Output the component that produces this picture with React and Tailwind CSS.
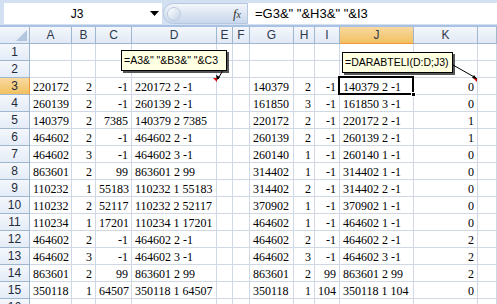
import React from "react";

const COLS = ["A", "B", "C", "D", "E", "F", "G", "H", "I", "J", "K", ""];

const ROWS = [
  null,
  null,
  ["220172", "2", "-1", "220172 2 -1", "140379", "2", "-1", "140379 2 -1", "0"],
  ["260139", "2", "-1", "260139 2 -1", "161850", "3", "-1", "161850 3 -1", "0"],
  ["140379", "2", "7385", "140379 2 7385", "220172", "2", "-1", "220172 2 -1", "1"],
  ["464602", "2", "-1", "464602 2 -1", "260139", "2", "-1", "260139 2 -1", "1"],
  ["464602", "3", "-1", "464602 3 -1", "260140", "1", "-1", "260140 1 -1", "0"],
  ["863601", "2", "99", "863601 2 99", "314402", "1", "-1", "314402 1 -1", "0"],
  ["110232", "1", "55183", "110232 1 55183", "314402", "2", "-1", "314402 2 -1", "0"],
  ["110232", "2", "52117", "110232 2 52117", "370902", "1", "-1", "370902 1 -1", "0"],
  ["110234", "1", "17201", "110234 1 17201", "464602", "1", "-1", "464602 1 -1", "0"],
  ["464602", "2", "-1", "464602 2 -1", "464602", "2", "-1", "464602 2 -1", "2"],
  ["464602", "3", "-1", "464602 3 -1", "464602", "3", "-1", "464602 3 -1", "2"],
  ["863601", "2", "99", "863601 2 99", "863601", "2", "99", "863601 2 99", "2"],
  ["350118", "1", "64507", "350118 1 64507", "350118", "1", "104", "350118 1 104", "0"],
  null,
];

const serif = { fontFamily: '"Liberation Serif", "Times New Roman", serif' };

function Cell({ children, align = "left", className = "" }) {
  return (
    <div
      className={
        "h-[17px] border-r border-b border-[#D0D7E5] overflow-visible whitespace-nowrap px-[3px] pt-[2px] text-[12px] leading-[15px] text-black " +
        (align === "right" ? "text-right " : "text-left ") +
        className
      }
      style={serif}
    >
      {children}
    </div>
  );
}

function RowHeader({ n, active }) {
  return (
    <div
      className={
        "h-[17px] border-r border-b border-[#9EB6CE] text-center text-[12px] leading-[16px] text-[#1f2a3a] " +
        (active
          ? "bg-gradient-to-b from-[#F9D99F] to-[#F1C15F] border-r-[#F29536]"
          : "bg-gradient-to-b from-[#F4F7FC] to-[#E4ECF7]")
      }
      style={{ fontFamily: '"Liberation Sans", Arial, sans-serif' }}
    >
      {n}
    </div>
  );
}

export default function App() {
  const rowNums = Array.from({ length: 16 }, (_, i) => i + 1);
  return (
    <div
      className="relative w-[497px] h-[304px] overflow-hidden bg-white"
      style={{ fontFamily: '"Liberation Sans", Arial, sans-serif' }}
    >
      {/* Formula bar */}
      <div className="flex h-[27px] bg-[#D3E0F1] border-b-[2px] border-[#A9C2E2] pl-[4px] pt-[3px] pb-[1px]">
        <div className="relative flex w-[158px] h-[21px] bg-white items-center">
          <span className="w-[146px] text-center text-[12px] text-black">J3</span>
          <svg width="9" height="5" viewBox="0 0 9 5">
            <path d="M0 0h9L4.5 5z" fill="#000" />
          </svg>
        </div>
        <div className="relative flex items-center w-[85px] h-[21px] rounded-l-[11px] bg-gradient-to-b from-[#F3F6FB] via-[#DCE6F3] to-[#C9D8EC] border border-[#B6C8E0] ml-[1px]">
          <div className="ml-[3px] w-[14px] h-[14px] rounded-full bg-gradient-to-br from-white to-[#C4D3E6] border border-[#BCCBDF]" />
          <span
            className="ml-auto mr-[6px] text-[13px] italic text-[#333]"
            style={{ fontFamily: '"Liberation Serif", "Times New Roman", serif' }}
          >
            f<span className="text-[10px]">x</span>
          </span>
        </div>
        <div className="flex-1 h-[21px] bg-white pl-[7px] text-[13px] leading-[21px] text-black whitespace-nowrap">
          =G3&amp;" "&amp;H3&amp;" "&amp;I3
        </div>
      </div>

      {/* Grid */}
      <div className="grid grid-cols-[30px_42px_24px_36px_85px_16px_17px_44px_21px_25px_74px_64px_1fr]">
        <div className="relative h-[17px] border-r border-b border-[#9EB6CE] bg-gradient-to-b from-[#F4F7FC] to-[#DFE8F5]">
          <svg className="absolute right-[2px] bottom-[2px]" width="11" height="11" viewBox="0 0 11 11">
            <path d="M11 0V11H0z" fill="#B4C6DE" />
          </svg>
        </div>
        {COLS.map((c, i) => (
          <div
            key={i}
            className={
              "h-[17px] border-r border-b border-[#9EB6CE] text-center text-[12px] leading-[16px] text-[#2c3a4e] " +
              (c === "J"
                ? "bg-gradient-to-b from-[#F9D99F] to-[#F1C15F] border-b-[#F29536]"
                : "bg-gradient-to-b from-[#F4F7FC] to-[#E1E9F5]")
            }
          >
            {c}
          </div>
        ))}

        {rowNums.map((n) => {
          const r = ROWS[n - 1];
          return (
            <React.Fragment key={n}>
              <RowHeader n={n} active={n === 3} />
              <Cell>{r ? r[0] : ""}</Cell>
              <Cell align="right">{r ? r[1] : ""}</Cell>
              <Cell align="right">{r ? r[2] : ""}</Cell>
              <Cell>{r ? r[3] : ""}</Cell>
              <Cell />
              <Cell />
              <Cell>{r ? r[4] : ""}</Cell>
              <Cell align="right">{r ? r[5] : ""}</Cell>
              <Cell align="right">{r ? r[6] : ""}</Cell>
              <Cell className={n === 3 ? "relative" : ""}>
                {r ? r[7] : ""}
                {n === 3 && (
                  <>
                    <div className="absolute left-[-2px] top-[-2px] right-[-1px] bottom-[-1px] border-[2px] border-black pointer-events-none" />
                    <div className="absolute right-[-3px] bottom-[-3px] w-[5px] h-[5px] bg-black border border-white" />
                  </>
                )}
              </Cell>
              <Cell align="right">{r ? r[8] : ""}</Cell>
              <Cell />
            </React.Fragment>
          );
        })}
      </div>

      {/* Comment 1 */}
      <div className="absolute left-[121px] top-[50px] w-[106px] h-[21px] bg-[#FFFFE1] border border-black shadow-[2px_2px_0_#555] px-[2px] text-[10.5px] leading-[19px] text-black whitespace-nowrap">
        =A3&amp;" "&amp;B3&amp;" "&amp;C3
      </div>
      {/* Comment 2 */}
      <div className="absolute left-[342px] top-[52px] w-[111px] h-[21px] bg-[#FFFFE1] border border-black shadow-[2px_2px_0_#555] px-[2px] text-[10.5px] leading-[19px] text-black whitespace-nowrap">
        =DARABTELI(D:D;J3)
      </div>

      <svg className="absolute left-0 top-0 pointer-events-none" width="497" height="304">
        <path d="M213 78h4v4z" fill="#E00000" />
        <path d="M473 78h4v4z" fill="#E00000" />
        <line x1="222.5" y1="71" x2="218" y2="79" stroke="#000" strokeWidth="1" />
        <path d="M217 80l-1-5 4 2z" fill="#000" />
        <line x1="453" y1="65" x2="476" y2="78" stroke="#000" strokeWidth="1" />
        <path d="M477 79l-5-1 2-3z" fill="#000" />
      </svg>
    </div>
  );
}
